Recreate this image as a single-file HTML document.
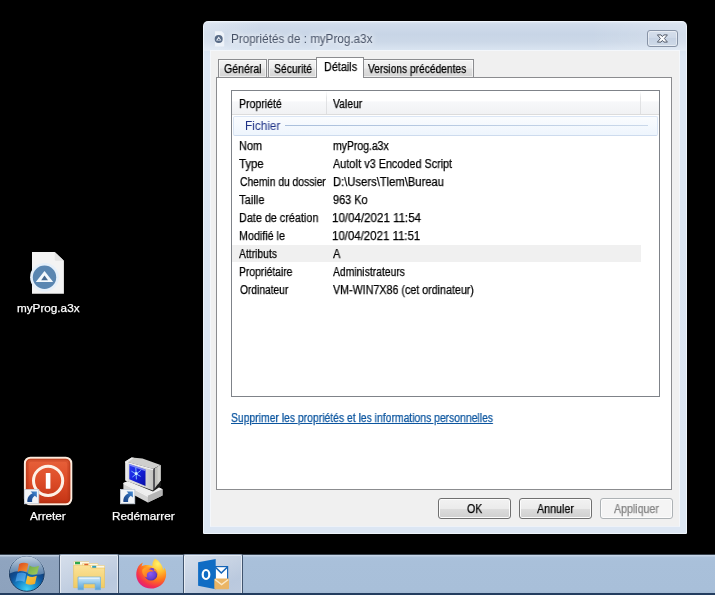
<!DOCTYPE html>
<html><head><meta charset="utf-8">
<style>
*{box-sizing:border-box;margin:0;padding:0}
html,body{width:715px;height:595px;overflow:hidden;background:#000}
body{font-family:"Liberation Sans",sans-serif;font-size:11px;color:#000;position:relative}
.abs{position:absolute}
.t{position:absolute;white-space:nowrap;will-change:transform;-webkit-text-stroke:.25px currentColor;font-size:12px;line-height:14px;transform-origin:0 0;transform:scaleX(.865)}
.d{position:absolute;white-space:nowrap;line-height:15px;font-size:12px;color:#fff;transform-origin:50% 0;text-align:center;text-shadow:0 1px 2px #000}
#taskbar{left:0;top:554px;width:715px;height:41px;background:linear-gradient(#c9d8ea,#c3d3e7 1px,#adc3dc 2px,#a9c0da 6px,#a8bfd9 35px,#a3bad4);border-top:1px solid #38434f;border-bottom:2px solid #233d5f}
#tbl{left:0;top:555px;width:59px;height:38px;background:linear-gradient(#c3d1e2,#bccbdd 1px,#96aac4 2px,#8fa4bf 6px,#8da2bd)}
#dlg{left:203px;top:21px;width:484px;height:513px;background:linear-gradient(90deg,rgba(255,255,255,.28),rgba(255,255,255,0) 12%,rgba(255,255,255,0) 80%,rgba(255,255,255,.22)) 0 0/100% 30px no-repeat,linear-gradient(#e4ecf6,#d0dceb 3px,#c8d5e6 13px,#ccd8e8 21px,#d8e3f0 28px,#dde7f4 36px,#dce6f3);border-radius:5px 5px 1px 1px;box-shadow:inset 0 0 0 1px #eef4fb}
#client{left:210px;top:50px;width:470px;height:477px;background:#f0f0f0;border:1px solid #f4f7fb;border-bottom-color:#eef2f8}
#panel{left:216px;top:77px;width:456px;height:413px;background:#fff;border:1px solid #8b8c8f}
.tab{position:absolute;top:59px;height:18px;border:1px solid #8b8c8f;border-bottom:none;background:linear-gradient(#f4f4f4,#ececec 48%,#e0e0e0 52%,#d4d4d4);box-shadow:inset 0 0 0 1px rgba(255,255,255,.6)}
.tab.sel{top:57px;height:21px;background:#fff;box-shadow:none}
#list{left:231px;top:90px;width:429px;height:307px;background:#fff;border:1px solid #7f8389}
#hdr{left:232px;top:91px;width:427px;height:24px;background:linear-gradient(#fff,#fff 45%,#f7f8fa 46%,#f1f2f4);border-bottom:1px solid #dcdcdc}
.hsep{position:absolute;top:91px;width:1px;height:23px;background:linear-gradient(#fff,#e3e4e6 30%,#dedfe1)}
#grp{left:233px;top:116px;width:425px;height:20px;border:1px solid #dbe6f5;border-bottom-color:#cddbee;border-radius:2px;background:linear-gradient(#fafcfe,#eef5fd)}
#grpl{left:285px;top:125px;width:363px;height:1px;background:linear-gradient(90deg,#aabfdc,#cad8ea)}
#hl{left:232px;top:245px;width:409px;height:17px;background:#f0f0f0}
.btn{position:absolute;top:498px;height:21px;width:73px;border:1px solid #707070;border-radius:3px;background:linear-gradient(#f2f2f2,#ebebeb 50%,#dddddd 50%,#cfcfcf);box-shadow:inset 0 0 0 1px #fcfcfc}
.btn.dis{border-color:#adb2b5;background:#f4f4f4}
.tb{position:absolute;top:554px;height:39px;width:60px;border:1px solid #40546e;border-top:1px solid rgba(60,75,95,.5);border-bottom:none;border-radius:2px 2px 0 0;background:linear-gradient(155deg,#d6dfeb,#c6d2e3 45%,#bac9de 75%,#bdcbdf);box-shadow:inset 0 1px 0 0 #e6edf5,inset 1px 0 0 0 rgba(255,255,255,.55),inset -1px 0 0 0 rgba(255,255,255,.55)}
</style></head><body>
<div class="abs" id="taskbar"></div>
<div class="abs" id="tbl"></div>
<div class="tb" style="left:59px"></div>
<div class="tb" style="left:183px"></div>

<div class="abs" id="dlg"></div>
<div class="abs" id="client"></div>
<div class="abs" id="panel"></div>
<div class="tab" style="left:218px;width:49px"></div>
<div class="tab" style="left:268px;width:49px"></div>
<div class="tab" style="left:362px;width:112px"></div>
<div class="tab sel" style="left:316px;width:48px"></div>
<span class="t" style="left:224.16px;top:62px;transform:scaleX(0.8819)">Général</span>
<span class="t" style="left:273.77px;top:62px;transform:scaleX(0.8651)">Sécurité</span>
<span class="t" style="left:323.70px;top:60px;transform:scaleX(0.9021)">Détails</span>
<span class="t" style="left:368.10px;top:62px;transform:scaleX(0.8504)">Versions précédentes</span>
<span class="t" style="left:231.23px;top:31px;font-size:12px;line-height:16px;color:#465166;-webkit-text-stroke:0;text-shadow:0 0 5px #fff,0 0 8px #fff;transform:scaleX(0.9726)">Propriétés de : myProg.a3x</span>


<!-- title icon -->
<svg class="abs" style="left:213px;top:30px" width="14" height="18" viewBox="0 0 14 18">
<path d="M2 1.2 H8.6 L11.2 3.8 V16.5 H2Z" fill="#eef3f9"/>
<circle cx="5.7" cy="9.1" r="4" fill="#566985"/>
<path d="M5.7 6.6 L8.4 10.6 H3Z" fill="#eef3f9"/>
<path d="M5.8 8.5 L7 10 H4.6Z" fill="#4d6383"/>
</svg>
<!-- close button -->
<div class="abs" style="left:647px;top:30px;width:31px;height:17px;border:1px solid #8793a6;border-radius:3px;background:linear-gradient(#d6dfec,#cdd8e7 50%,#c6d2e3 50%,#cfdae8);box-shadow:inset 0 0 0 1px rgba(255,255,255,.45)"></div>
<svg class="abs" style="left:655px;top:32px" width="15" height="13" viewBox="0 0 15 13">
<path d="M2.4 2.9 H6 L7.4 4.6 L8.8 2.9 H12.4 L9.4 6.5 L12.4 10.1 H8.8 L7.4 8.4 L6 10.1 H2.4 L5.4 6.5Z" fill="#fbfcfe" stroke="#555d6c" stroke-width="1" stroke-linejoin="round"/>
</svg>
<div class="abs" id="list"></div>
<div class="abs" id="hdr"></div>
<div class="hsep" style="left:326px"></div>
<div class="hsep" style="left:640px"></div>
<span class="t" style="left:238.92px;top:97px;transform:scaleX(0.8783)">Propriété</span>
<span class="t" style="left:333.30px;top:97px;transform:scaleX(0.8652)">Valeur</span>
<div class="abs" id="grp"></div>
<div class="abs" id="grpl"></div>
<span class="t" style="left:244.62px;top:119px;font-size:12px;line-height:15px;color:#1e3287;-webkit-text-stroke:0;transform:scaleX(0.9813)">Fichier</span>
<div class="abs" id="hl"></div>
<span class="t" style="left:238.99px;top:139px;transform:scaleX(0.9106)">Nom</span><span class="t" style="left:332.85px;top:139px;transform:scaleX(0.8698)">myProg.a3x</span>
<span class="t" style="left:239.06px;top:157px;transform:scaleX(0.9465)">Type</span><span class="t" style="left:333.10px;top:157px;transform:scaleX(0.9015)">AutoIt v3 Encoded Script</span>
<span class="t" style="left:239.57px;top:175px;transform:scaleX(0.8573)">Chemin du dossier</span><span class="t" style="left:332.86px;top:175px;transform:scaleX(0.9350)">D:\Users\Tlem\Bureau</span>
<span class="t" style="left:239.07px;top:193px;transform:scaleX(0.9321)">Taille</span><span class="t" style="left:332.94px;top:193px;transform:scaleX(0.9108)">963 Ko</span>
<span class="t" style="left:239.10px;top:211px;transform:scaleX(0.9009)">Date de création</span><span class="t" style="left:332.44px;top:211px;transform:scaleX(0.9622)">10/04/2021 11:54</span>
<span class="t" style="left:239.11px;top:229px;transform:scaleX(0.8945)">Modifié le</span><span class="t" style="left:332.45px;top:229px;transform:scaleX(0.9538)">10/04/2021 11:51</span>
<span class="t" style="left:239.30px;top:247px;transform:scaleX(0.8621)">Attributs</span><span class="t" style="left:332.80px;top:247px;transform:scaleX(0.9250)">A</span>
<span class="t" style="left:239.14px;top:265px;transform:scaleX(0.8612)">Propriétaire</span><span class="t" style="left:332.80px;top:265px;transform:scaleX(0.8627)">Administrateurs</span>
<span class="t" style="left:239.57px;top:283px;transform:scaleX(0.8518)">Ordinateur</span><span class="t" style="left:332.90px;top:283px;transform:scaleX(0.8916)">VM-WIN7X86 (cet ordinateur)</span>

<span class="t" style="left:230.57px;top:411px;color:#0b559f;text-decoration:underline;text-underline-offset:.5px;transform:scaleX(0.8652)">Supprimer les propriétés et les informations personnelles</span>

<div class="btn" style="left:438px"></div>
<div class="btn" style="left:519px"></div>
<div class="btn dis" style="left:600px"></div>
<span class="t" style="left:467.36px;top:502px;transform:scaleX(0.8848)">OK</span>
<span class="t" style="left:536.60px;top:502px;transform:scaleX(0.8921)">Annuler</span>
<span class="t" style="left:614.30px;top:502px;color:#838383;transform:scaleX(0.8851)">Appliquer</span>

<span class="t" style="left:16.80px;top:301px;font-size:11px;line-height:15px;color:#fff;text-shadow:0 1px 2px #000;transform:scaleX(1.0649)">myProg.a3x </span>
<span class="t" style="left:30.00px;top:509px;font-size:11px;line-height:15px;color:#fff;text-shadow:0 1px 2px #000;transform:scaleX(1.0627)">Arreter</span>
<span class="t" style="left:112.13px;top:509px;font-size:11px;line-height:15px;color:#fff;text-shadow:0 1px 2px #000;transform:scaleX(1.0661)">Redémarrer</span>

<!-- start orb -->
<svg class="abs" style="left:6px;top:553px" width="42" height="42" viewBox="0 0 42 42">
<defs>
<radialGradient id="og" cx="50%" cy="95%" r="75%"><stop offset="0" stop-color="#3fd2f5"/><stop offset=".35" stop-color="#1a8fd0"/><stop offset=".7" stop-color="#0f4f96"/><stop offset="1" stop-color="#123a6c"/></radialGradient>
<linearGradient id="ogl" x1="0" y1="0" x2="0" y2="1"><stop offset="0" stop-color="#cbd8e6" stop-opacity=".97"/><stop offset="1" stop-color="#6a8fb5" stop-opacity=".8"/></linearGradient>
<linearGradient id="fr" x1="0" y1="0" x2="1" y2="1"><stop offset="0" stop-color="#d9441e"/><stop offset="1" stop-color="#f59a2e"/></linearGradient>
<linearGradient id="fg" x1="0" y1="0" x2="1" y2="1"><stop offset="0" stop-color="#6aa84a"/><stop offset="1" stop-color="#a6cf5a"/></linearGradient>
<linearGradient id="fb" x1="0" y1="0" x2="1" y2="1"><stop offset="0" stop-color="#2a7fd0"/><stop offset="1" stop-color="#5cb3ee"/></linearGradient>
<linearGradient id="fy" x1="0" y1="0" x2="1" y2="1"><stop offset="0" stop-color="#f7c83a"/><stop offset="1" stop-color="#f3a62a"/></linearGradient>
</defs>
<circle cx="20.8" cy="20.9" r="18.3" fill="#b7c9dd" opacity=".6"/>
<circle cx="20.8" cy="20.9" r="17.4" fill="url(#og)" stroke="#1d3a5e" stroke-width="1"/>
<path d="M3.6 20.5 A17.2 17.2 0 0 1 38 20.5 Q29 23.5 20.8 19.5 Q12 16 3.6 20.5Z" fill="url(#ogl)"/>
<path d="M13.2 11 Q17.6 8.4 22.4 10.8 L20.6 19 Q16.2 16.6 11.6 19Z" fill="url(#fr)"/>
<path d="M23.6 12.4 Q28 15.2 33 12.8 L31.2 20.8 Q26.4 23 21.8 20.4Z" fill="url(#fg)"/>
<path d="M11.2 20.6 Q15.6 18.4 20.2 20.8 L18.4 28.9 Q14 26.6 9.4 28.8Z" fill="url(#fb)"/>
<path d="M21.4 22.4 Q25.8 25.2 30.8 22.8 L29 30.8 Q24.2 33 19.6 30.4Z" fill="url(#fy)"/>
</svg>

<!-- explorer icon -->
<svg class="abs" style="left:72px;top:559px" width="36" height="34" viewBox="0 0 36 34">
<defs>
<linearGradient id="ef" x1="0" y1="0" x2="0" y2="1"><stop offset="0" stop-color="#fbe39a"/><stop offset="1" stop-color="#f1cb63"/></linearGradient>
<linearGradient id="eb" x1="0" y1="0" x2="0" y2="1"><stop offset="0" stop-color="#d4ecfa"/><stop offset=".5" stop-color="#8cc4ea"/><stop offset="1" stop-color="#5aa2d8"/></linearGradient>
</defs>
<path d="M1.6 2.5 H17 V5 H1.6Z" fill="#f3d27a"/>
<rect x="2" y="3" width="15" height="4" fill="#fdf8e6"/>
<rect x="3" y="2.8" width="5" height="2.5" fill="#2fa84a"/>
<path d="M10.5 4.5 H26 V8 H10.5Z" fill="#fdf8e6" stroke="#f0cf78" stroke-width=".6"/>
<rect x="12.3" y="4.8" width="4" height="2.5" fill="#d9532a"/>
<path d="M18 6.5 H32.5 V10 H18Z" fill="#fdf8e6" stroke="#f0cf78" stroke-width=".6"/>
<rect x="20.2" y="6.8" width="4" height="2.5" fill="#2a9fc0"/>
<path d="M1.6 6.2 H18 L19 9 H32.5 V28.7 H1.6Z" fill="url(#ef)" stroke="#e9c15a" stroke-width=".6"/>
<path d="M6 18 H28.5 V30.7 H23.2 V24.8 H11.4 V30.7 H6Z" fill="url(#eb)" stroke="#6fb0de" stroke-width=".7"/>
<path d="M7.2 19.2 H27.3" stroke="#eef8fe" stroke-width="1"/>
</svg>

<!-- firefox -->
<svg class="abs" style="left:134px;top:557px" width="34" height="34" viewBox="0 0 34 34">
<defs>
<radialGradient id="ff1" cx="72%" cy="18%" r="95%"><stop offset="0" stop-color="#fff36a"/><stop offset=".3" stop-color="#ffbd2f"/><stop offset=".55" stop-color="#ff7a1a"/><stop offset=".8" stop-color="#f5314d"/><stop offset="1" stop-color="#d81a8e"/></radialGradient>
<radialGradient id="ff2" cx="45%" cy="45%" r="60%"><stop offset="0" stop-color="#8a5cf5"/><stop offset=".7" stop-color="#6a3fd0"/><stop offset="1" stop-color="#4a2aa0"/></radialGradient>
<linearGradient id="ff3" x1="0" y1="0" x2="1" y2="1"><stop offset="0" stop-color="#ffb02a"/><stop offset="1" stop-color="#ff5a20"/></linearGradient>
</defs>
<path d="M21 1.5 C19 4 18 6.5 18.5 9 C14 7.5 9.5 8 7.5 9.5 C7.8 7.8 8.3 6.6 9 5.5 C6.5 6.5 4.6 8.6 3.6 11 C1.2 16.5 2 23 6.5 27.5 C11.5 32.5 20.5 33 26.5 28.5 C32.5 24 33.5 16 30.6 10.4 C30.2 11.6 29.8 12.4 29.2 13 C28.6 8.4 25.4 3.8 21 1.5Z" fill="url(#ff1)"/>
<circle cx="17" cy="17.2" r="6.4" fill="url(#ff2)"/>
<path d="M8.4 12.6 C10.8 10.2 15 9.6 18.6 11 C17 11 15.6 11.6 14.8 12.6 C16.8 12.4 18.8 13.2 19.8 14.8 C17.8 14 15.4 14.4 14 15.6 C12.6 16.8 12.4 19 13.4 20.6 C10.8 20.2 8.8 18 8.4 15.6 C8.2 14.4 8.2 13.4 8.4 12.6Z" fill="url(#ff3)"/>
<path d="M20.5 11.4 C23.4 13 24.6 16.4 23.6 19.4 C23.4 16.6 22 14.4 19.8 13.6Z" fill="#ff9a2a" opacity=".85"/>
</svg>

<!-- outlook -->
<svg class="abs" style="left:196px;top:557px" width="36" height="34" viewBox="0 0 36 34">
<rect x="19" y="9.6" width="12.6" height="13" fill="#fff" stroke="#1565b8" stroke-width="1.2"/>
<path d="M19.4 10.2 L25.3 16 L31.2 10.2" fill="none" stroke="#1565b8" stroke-width="1.6"/>
<path d="M2.1 5.2 L19.7 2 V32.2 L2.1 28.7Z" fill="#0f6cc4"/>
<ellipse cx="10" cy="17.5" rx="3.3" ry="4.5" fill="none" stroke="#fff" stroke-width="2.2"/>
<rect x="18.3" y="21.4" width="14.7" height="10.8" rx="1" fill="#ebb566"/>
<path d="M19 22.4 L25.6 27.6 L32.3 22.4" fill="none" stroke="#fbe9c9" stroke-width="1.3"/>
</svg>

<!-- a3x file icon -->
<svg class="abs" style="left:28px;top:249px" width="40" height="48" viewBox="0 0 40 48">
<path d="M4 2.9 H26.7 L35.9 11.7 V44.7 H4Z" fill="#f3f3f3"/>
<path d="M26.7 2.9 L35.9 11.7 H28.2 Q26.7 11.7 26.7 10.2Z" fill="#e4e4e4"/>
<circle cx="16.5" cy="28.3" r="14.4" fill="#e6f0fa"/>
<circle cx="16.5" cy="28.3" r="11.7" fill="#5a86b1"/>
<path d="M16.5 22 L25.2 33 H7.8Z" fill="#f4f9fd"/>
<path d="M16.5 26.6 L20 31.3 H13.2Z" fill="#46698f"/>
</svg>

<!-- arreter icon -->
<svg class="abs" style="left:22px;top:455px" width="52" height="52" viewBox="0 0 52 52">
<defs>
<linearGradient id="ar" x1="0" y1="0" x2="0" y2="1"><stop offset="0" stop-color="#e8623b"/><stop offset=".5" stop-color="#dd4c28"/><stop offset="1" stop-color="#c33314"/></linearGradient>
<linearGradient id="sa" x1="0" y1="1" x2="1" y2="0"><stop offset="0" stop-color="#163f80"/><stop offset=".6" stop-color="#2a64ad"/><stop offset="1" stop-color="#4a8fd6"/></linearGradient>
</defs>
<rect x="2.9" y="2.7" width="46.4" height="46.6" rx="5.5" fill="url(#ar)" stroke="#fcebdd" stroke-width="2"/>
<rect x="4.7" y="4.5" width="42.8" height="43" rx="4" fill="none" stroke="#a92f12" stroke-width="1.6" opacity=".55"/>
<rect x="6.2" y="6" width="39.8" height="40" rx="3" fill="none" stroke="#b5381a" stroke-width="1.6" opacity=".3"/>
<circle cx="26.1" cy="25.8" r="14.6" fill="none" stroke="#fdf0e6" stroke-width="3"/>
<rect x="23.8" y="18" width="4.6" height="15.8" rx=".6" fill="#fff"/>
</svg>
<svg class="abs sc" style="left:24.3px;top:489.3px" width="15.6" height="15.6" viewBox="0 0 17 17">
<rect x=".5" y=".5" width="15.6" height="15.6" fill="#f2f5f8" stroke="#c3ccd8" stroke-width=".9"/>
<path d="M7.2 2.6 H14 V9.4 L11.8 7.3 C9.4 8.9 8.5 11 8.9 14.3 L3.7 14.3 C3.3 9.6 5.3 6.4 9.3 4.6Z" fill="url(#sa)"/>
</svg>

<!-- redemarrer icon -->
<svg class="abs" style="left:118px;top:453px" width="50" height="54" viewBox="0 0 50 54">
<defs>
<linearGradient id="sc1" x1="0" y1="0" x2="1" y2="1"><stop offset="0" stop-color="#2b3cf4"/><stop offset=".5" stop-color="#1420dc"/><stop offset="1" stop-color="#0a10a4"/></linearGradient>
<linearGradient id="mf" x1="0" y1="0" x2="1" y2="0"><stop offset="0" stop-color="#f4f4f4"/><stop offset=".12" stop-color="#dedede"/><stop offset=".75" stop-color="#d6d6d4"/><stop offset="1" stop-color="#c4c4c2"/></linearGradient>
</defs>
<!-- base -->
<path d="M5.4 29.9 L20 24 L44.5 36.3 V42.4 L29.9 49.6 L5.4 36.6Z" fill="#d4d4d4"/>
<path d="M5.4 29.9 L20 24 L44.5 36.3 L29.9 42.8Z" fill="#efefef"/>
<path d="M29.9 42.8 L44.5 36.3 V42.4 L29.9 49.6Z" fill="#b4b4b4"/>
<path d="M5.4 29.9 L29.9 42.8 V44 L5.4 31.1Z" fill="#fafafa" opacity=".8"/>
<!-- shadow under monitor -->
<path d="M7 27 L35 38.6 L43 33 L42.5 27 L20 22Z" fill="#1c1c1c"/>
<!-- monitor top -->
<path d="M7.2 8.4 L13.6 4.5 L24.5 5.4 L42.6 12 L35.3 16Z" fill="#cfcfcd"/>
<path d="M7.2 8.4 L13.6 4.5 L16 4.7 L9.6 9.2Z" fill="#ececec"/>
<!-- side -->
<path d="M35.1 16 L42.6 12 V27.6 L35.1 37.4Z" fill="#55555a"/>
<path d="M37 15.2 L42.6 12 V27.6 L37 34.8Z" fill="#c2c2be"/>
<path d="M39.6 13.8 L42.6 12 V27.6 L39.6 31.4Z" fill="#d2d2ce"/>
<!-- front -->
<path d="M7.2 8.4 L35.1 16 V37.4 L7.2 27.4Z" fill="url(#mf)"/>
<path d="M7.2 8.4 L35.1 16 V17.2 L7.2 9.6Z" fill="#f2f2f2"/>
<path d="M11.3 10.9 L27.5 16.6 V33.1 L11.3 26.3Z" fill="url(#sc1)"/>
<path d="M11.3 10.9 L27.5 16.6 V18.2 L11.3 12.5Z" fill="#9aa4f8" opacity=".75"/>
<path d="M17.8 14.6 L18.4 26.4 M13.4 18.2 L22.6 23.4 M22.8 17.4 L14.4 24" stroke="#8cc8ff" stroke-width="1" opacity=".9"/>
<circle cx="18.1" cy="20.6" r="1.5" fill="#d8f0ff"/>
</svg>
<svg class="abs sc" style="left:120.3px;top:489.2px" width="15.6" height="15.6" viewBox="0 0 17 17">
<rect x=".5" y=".5" width="15.6" height="15.6" fill="#f2f5f8" stroke="#c3ccd8" stroke-width=".9"/>
<path d="M7.2 2.6 H14 V9.4 L11.8 7.3 C9.4 8.9 8.5 11 8.9 14.3 L3.7 14.3 C3.3 9.6 5.3 6.4 9.3 4.6Z" fill="url(#sa)"/>
</svg>
</body></html>
